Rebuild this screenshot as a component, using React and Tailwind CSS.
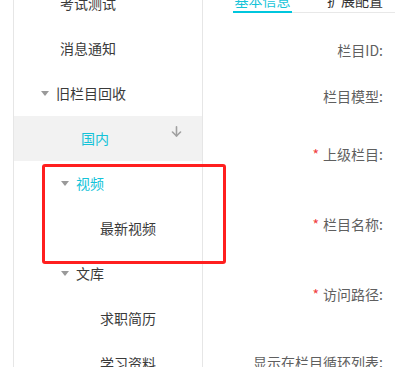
import React from "react";

const font = { fontFamily: '"Noto Sans CJK SC", "Noto Sans", sans-serif' };

function Caret() {
  return (
    <svg width="8" height="5" viewBox="0 0 8 5" className="mr-[7px] shrink-0">
      <polygon points="0,0 8,0 4,5" fill="#9a9a9a" />
    </svg>
  );
}

function ArrowDown() {
  return (
    <svg width="11" height="11" viewBox="0 0 11 11" fill="none" stroke="#a0a0a0" strokeWidth="1.6" strokeLinecap="round" strokeLinejoin="round">
      <line x1="5.5" y1="0.8" x2="5.5" y2="10" />
      <polyline points="1.5,6 5.5,10 9.5,6" />
    </svg>
  );
}

const menu = [
  { text: "考试测试", pl: "pl-[46px]" },
  { text: "消息通知", pl: "pl-[46px]" },
  { text: "旧栏目回收", pl: "pl-[27px]", caret: true },
  { text: "国内", pl: "pl-[67px]", active: true, hint: true },
  { text: "视频", pl: "pl-[47px]", caret: true, cyan: true },
  { text: "最新视频", pl: "pl-[86px]" },
  { text: "文库", pl: "pl-[47px]", caret: true },
  { text: "求职简历", pl: "pl-[86px]" },
  { text: "学习资料", pl: "pl-[86px]" },
];

const fields = [
  { label: "栏目ID:", h: "h-[46px]" },
  { label: "栏目模型:", h: "h-[46px]" },
  { label: "上级栏目:", h: "h-[70px]", req: true },
  { label: "栏目名称:", h: "h-[70px]", req: true },
  { label: "访问路径:", h: "h-[70px]", req: true },
  { label: "显示在栏目循环列表:", h: "h-[66px]" },
];

export default function App() {
  return (
    <div className="relative flex w-[395px] h-[367px] overflow-hidden bg-white text-[14px]" style={font}>
      <div className="w-[13px] shrink-0" />
      <div className="w-[190px] shrink-0 border-l border-r border-[#e6e6e6]">
        <div className="-mt-[19px] flex flex-col">
          {menu.map((m) => (
            <div
              key={m.text}
              className={`flex items-center h-[45px] ${m.pl} ${m.active ? "bg-[#f2f2f2]" : ""}`}
            >
              {m.caret && <Caret />}
              <span className={m.active || m.cyan ? "text-[#14c3d8]" : "text-[#3a3a3a]"}>{m.text}</span>
              {m.hint && (
                <span className="ml-auto mr-[20px] self-start mt-[10px]">
                  <ArrowDown />
                </span>
              )}
            </div>
          ))}
        </div>
      </div>
      <div className="flex-1 flex flex-col pl-[30px]">
        <div className="-mt-[10px] flex border-b border-[#e8e8e8] h-[26px]">
          <div className="w-[59px] text-center text-[#14c3d8] border-b-2 border-[#00c6dd] -mb-px">基本信息</div>
          <div className="ml-[35px] text-[#333] whitespace-nowrap">扩展配置</div>
        </div>
        <div className="mt-[14px] flex flex-col">
          {fields.map((f) => (
            <div key={f.label} className={`flex items-center justify-end pr-[12px] ${f.h} text-[#5f5f5f] whitespace-nowrap`}>
              {f.req && <span className="text-[#f04040] mr-[4px]">*</span>}
              {f.label}
            </div>
          ))}
        </div>
      </div>
      <div className="absolute left-[42px] top-[164px] w-[184px] h-[100px] border-[3px] border-[#ff1f1f] rounded-[3px]" />
    </div>
  );
}
